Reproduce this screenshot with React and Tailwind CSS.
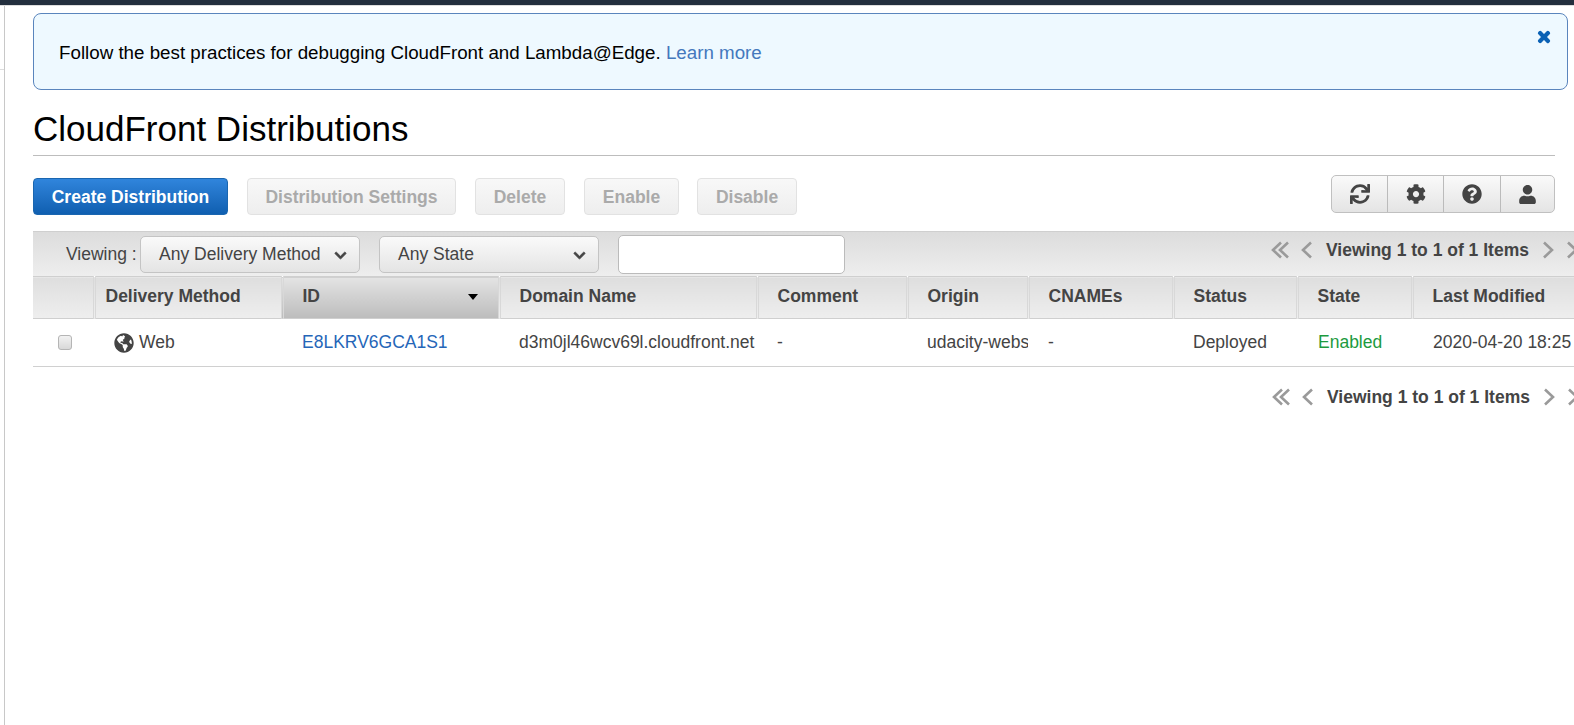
import { FaSync, FaCog, FaQuestionCircle, FaUser, FaTimes, FaGlobeAmericas, FaChevronDown } from 'react-icons/fa';

const columns = [
  { label: '', width: 'w-[61px]' },
  { label: 'Delivery Method', width: 'w-[188px]', pad: 'pl-[10px]' },
  { label: 'ID', width: 'w-[217px]', pad: 'pl-[19px]', sorted: true },
  { label: 'Domain Name', width: 'w-[258px]' },
  { label: 'Comment', width: 'w-[150px]' },
  { label: 'Origin', width: 'w-[121px]' },
  { label: 'CNAMEs', width: 'w-[145px]' },
  { label: 'Status', width: 'w-[124px]' },
  { label: 'State', width: 'w-[115px]' },
  { label: 'Last Modified', width: 'w-[162px]' },
];

const Chevron = ({ dir = 'left', double = false }) => (
  <svg width={double ? 18 : 11} height="18" viewBox={double ? '0 0 18 18' : '0 0 11 18'} fill="none" stroke="#9a9a9a" strokeWidth="2.6" className="shrink-0">
    {dir === 'left' ? (
      <>
        <path d="M10 1.5 2 9l8 7.5" />
        {double && <path d="M17 1.5 9 9l8 7.5" />}
      </>
    ) : (
      <>
        <path d="M1 1.5 9 9l-8 7.5" />
        {double && <path d="M8 1.5 16 9l-8 7.5" />}
      </>
    )}
  </svg>
);

const Pager = () => (
  <div className="flex items-center w-[310px] shrink-0 text-[#444] font-bold text-[17.5px]">
    <Chevron double />
    <span className="ml-[12px]"><Chevron /></span>
    <span className="ml-[14px] whitespace-nowrap">Viewing 1 to 1 of 1 Items</span>
    <span className="ml-[14px]"><Chevron dir="right" /></span>
    <span className="ml-[13px]"><Chevron dir="right" double /></span>
  </div>
);

const DisabledButton = ({ children, className }) => (
  <button className={`h-[37px] pt-[2px] rounded-[4px] border border-[#e2e2e2] bg-linear-to-b from-[#f8f8f8] to-[#eeeeee] font-bold text-[#aaa] text-[17.5px] ${className}`}>
    {children}
  </button>
);

const Select = ({ children, className }) => (
  <div className={`flex items-center justify-between shrink-0 h-[37px] rounded-[5px] border border-[#c4c4c4] bg-linear-to-b from-[#fafafa] to-[#e4e4e4] pl-[18px] pr-[12px] text-[#444] text-[17.5px] ${className}`}>
    <span className="whitespace-nowrap">{children}</span>
    <FaChevronDown className="text-[#444] mt-[3px]" size={13} stroke="currentColor" strokeWidth={30} />
  </div>
);

const ToolButton = ({ icon: Icon, size = 20, className = '' }) => (
  <button className={`flex items-center justify-center h-full text-[#444] ${className}`}>
    <Icon size={size} />
  </button>
);

export default function App() {
  return (
    <div className="h-screen overflow-hidden bg-white font-['Liberation_Sans',Arial,sans-serif] flex flex-col">
      <div className="h-[5px] bg-[#232f3e] shrink-0"></div>
      <div className="flex flex-1 min-h-0 border-t border-[#ddd]">
        {/* left rail */}
        <div className="w-[5px] shrink-0 border-r border-[#c8c8c8]">
          <div className="h-[64px] border-b border-[#ddd]"></div>
        </div>

        <div className="flex-1 min-w-0 pl-[28px] pt-[7px] overflow-hidden">
          {/* Notice */}
          <div className="relative h-[77px] w-[1535px] rounded-[8px] border border-[#5a85bd] bg-[#eef9ff] flex items-center pl-[25px] pt-[4px] text-[18.75px] text-black">
            <span>
              Follow the best practices for debugging CloudFront and Lambda@Edge. <a className="text-[#4478bd]">Learn more</a>
            </span>
            <FaTimes className="absolute right-[15px] top-[15px] text-[#0b62b5]" size={16} stroke="currentColor" strokeWidth={40} />
          </div>

          <h1 className="w-[1522px] mt-[17px] h-[49px] border-b border-[#bdbdbd] text-[35px] leading-[43px] text-black">
            CloudFront Distributions
          </h1>

          {/* Actions */}
          <div className="w-[1522px] mt-[22px] flex items-start">
            <button className="h-[37px] w-[195px] pt-[2px] rounded-[4px] border border-[#1a66b0] bg-linear-to-b from-[#3085dc] to-[#0f5fb0] font-bold text-white text-[17.5px]">
              Create Distribution
            </button>
            <DisabledButton className="w-[209px] ml-[19px]">Distribution Settings</DisabledButton>
            <DisabledButton className="w-[90px] ml-[19px]">Delete</DisabledButton>
            <DisabledButton className="w-[95px] ml-[19px]">Enable</DisabledButton>
            <DisabledButton className="w-[100px] ml-[18px]">Disable</DisabledButton>
            <div className="ml-auto -mt-[3px] flex h-[38px] w-[224px] rounded-[5px] border border-[#c0c0c0] bg-linear-to-b from-[#fafafa] to-[#e4e4e4] divide-x divide-[#bbb]">
              <ToolButton icon={FaSync} className="w-[56px]" />
              <ToolButton icon={FaCog} className="w-[56px]" />
              <ToolButton icon={FaQuestionCircle} className="w-[57px]" />
              <ToolButton icon={FaUser} size={19} className="flex-1" />
            </div>
          </div>

          {/* Filter bar */}
          <div className="mt-[16px] h-[45px] w-[1541px] border-t border-[#cfcfcf] bg-linear-to-b from-[#dcdcdc] to-[#eeeeee] flex items-center text-[#444] text-[17.5px]">
            <span className="ml-[33px] w-[74px] shrink-0 whitespace-nowrap">Viewing :</span>
            <Select className="w-[220px]">Any Delivery Method</Select>
            <Select className="w-[220px] ml-[19px]">Any State</Select>
            <input className="w-[227px] h-[39px] shrink-0 ml-[19px] rounded-[5px] border border-[#bbb] bg-white" />
            <div className="ml-[426px] mb-[8px]"><Pager /></div>
          </div>

          {/* Table */}
          <table className="table-fixed w-[1541px] border-collapse text-[17.5px] text-[#444]">
            <colgroup>
              {columns.map((c) => <col key={c.label} className={c.width} />)}
            </colgroup>
            <thead>
              <tr className="h-[42px] border-y border-[#cfcfcf]">
                {columns.map((c, i) => (
                  <th
                    key={c.label}
                    className={`p-0 pb-[2px] text-left font-bold whitespace-nowrap ${i > 0 ? 'border-l-[3px] border-double border-l-[#d8d8d8]' : ''} ${c.pad || 'pl-[19px]'} ${c.sorted ? 'bg-linear-to-b from-[#e4e4e4] to-[#bcbcbc]' : 'bg-linear-to-b from-[#dedede] to-[#eeeeee]'}`}
                  >
                    <div className="flex items-center justify-between pr-[20px]">
                      <span>{c.label}</span>
                      {c.sorted && <span className="w-0 h-0 border-x-[5px] border-x-transparent border-t-[6px] border-t-black"></span>}
                    </div>
                  </th>
                ))}
              </tr>
            </thead>
            <tbody>
              <tr className="h-[48px] border-b border-[#d0d0d0] whitespace-nowrap">
                <td className="p-0 pl-[25px]">
                  <input type="checkbox" className="block appearance-none w-[14px] h-[15px] rounded-[3px] border border-[#b5b5b5] bg-linear-to-b from-[#f2f2f2] to-[#d8d8d8]" />
                </td>
                <td className="p-0 pl-[20px]">
                  <div className="flex items-center gap-[5px]">
                    <FaGlobeAmericas size={20} className="text-[#444]" />
                    <span>Web</span>
                  </div>
                </td>
                <td className="p-0 pl-[20px] text-[#2566b8]">E8LKRV6GCA1S1</td>
                <td className="p-0 pl-[20px] overflow-hidden">d3m0jl46wcv69l.cloudfront.net</td>
                <td className="p-0 pl-[20px]">-</td>
                <td className="p-0 pl-[20px] overflow-hidden">udacity-webs</td>
                <td className="p-0 pl-[20px]">-</td>
                <td className="p-0 pl-[20px]">Deployed</td>
                <td className="p-0 pl-[21px] text-[#1d9a3e]">Enabled</td>
                <td className="p-0 pl-[21px]">2020-04-20 18:25</td>
              </tr>
            </tbody>
          </table>

          {/* Bottom pager */}
          <div className="w-[1549px] mt-[17px] flex justify-end">
            <Pager />
          </div>
        </div>
      </div>
    </div>
  );
}
